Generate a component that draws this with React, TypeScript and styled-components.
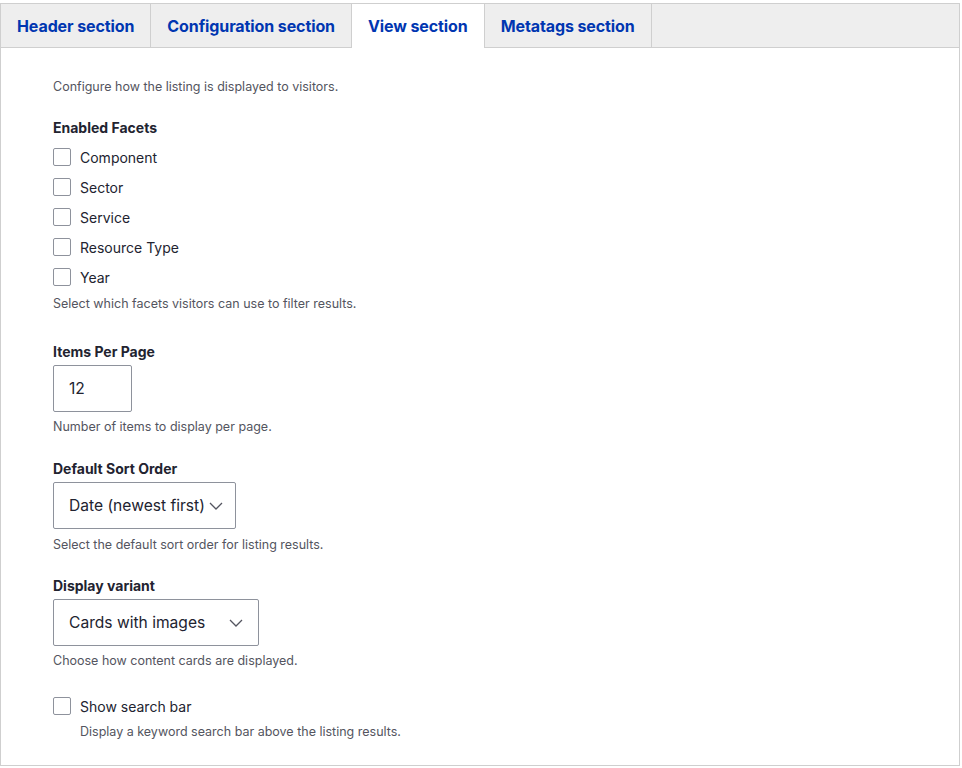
import React from "react";
import styled, { createGlobalStyle } from "styled-components";

const Global = createGlobalStyle`
  html, body { margin: 0; padding: 0; background: #ffffff; }
  body { font-family: Inter, "Noto Sans", "Liberation Sans", sans-serif; color: #222330; }
  * { box-sizing: border-box; }
`;

const Page = styled.div`
  padding-top: 3px;
  width: 960px;
`;

const Panel = styled.section`
  border: 1px solid #cfcfcf;
  background: #fff;
`;

const TabBar = styled.nav`
  display: flex;
  height: 44px;
  background: #eeeeee;
  border-bottom: 1px solid #cfcfcf;
`;

const Tab = styled.div<{ $active?: boolean }>`
  display: flex;
  align-items: center;
  padding: 0 16px;
  height: ${(p) => (p.$active ? "44px" : "43px")};
  background: ${(p) => (p.$active ? "#ffffff" : "transparent")};
  border-right: 1px solid #cfcfcf;
  color: #0036b1;
  font-weight: 700;
  font-size: 16px;
  letter-spacing: -0.1px;
  white-space: nowrap;
`;

const Body = styled.div`
  padding: 30px 52px 24px;
`;

const Intro = styled.p`
  margin: 0;
  font-size: 12.5px;
  line-height: 18px;
  color: #545560;
`;

const Label = styled.div<{ $gap: number }>`
  margin-top: ${(p) => p.$gap}px;
  font-size: 14px;
  line-height: 18px;
  font-weight: 700;
  color: #222330;
`;

const CheckRow = styled.label`
  display: flex;
  align-items: center;
  gap: 9px;
  height: 30px;
  font-size: 14px;
  color: #222330;
`;

const Box = styled.span`
  width: 18px;
  height: 18px;
  border: 1px solid #8e929c;
  border-radius: 2px;
  background: #fff;
  flex: none;
`;

const Desc = styled.div<{ $gap: number; $indent?: boolean }>`
  margin-top: ${(p) => p.$gap}px;
  padding-left: ${(p) => (p.$indent ? "27px" : "0")};
  font-size: 12.5px;
  line-height: 18px;
  color: #545560;
`;

const Field = styled.div<{ $w: number; $spread?: boolean }>`
  margin-top: 4px;
  width: ${(p) => p.$w}px;
  height: 47px;
  border: 1px solid #8e929c;
  border-radius: 2px;
  display: flex;
  align-items: center;
  justify-content: ${(p) => (p.$spread ? "space-between" : "flex-start")};
  gap: 4px;
  padding: 0 15px;
  font-size: 15.6px;
  color: #222330;
  white-space: nowrap;
`;

const Spacer = styled.div<{ $h: number }>`
  height: ${(p) => p.$h}px;
`;

const Chevron = () => (
  <svg width="14" height="8" viewBox="0 0 14 8" fill="none" style={{ flex: "none" }}>
    <path d="M1 1l6 6 6-6" stroke="#545560" strokeWidth="1.3" />
  </svg>
);

const facets = ["Component", "Sector", "Service", "Resource Type", "Year"];

export default function App() {
  return (
    <Page>
      <Global />
      <Panel>
        <TabBar>
          <Tab>Header section</Tab>
          <Tab>Configuration section</Tab>
          <Tab $active>View section</Tab>
          <Tab>Metatags section</Tab>
        </TabBar>
        <Body>
          <Intro>Configure how the listing is displayed to visitors.</Intro>
          <Label $gap={23}>Enabled Facets</Label>
          <Spacer $h={5} />
          {facets.map((f) => (
            <CheckRow key={f}>
              <Box />
              {f}
            </CheckRow>
          ))}
          <Desc $gap={3}>Select which facets visitors can use to filter results.</Desc>
          <Label $gap={30}>Items Per Page</Label>
          <Field $w={79}>12</Field>
          <Desc $gap={6}>Number of items to display per page.</Desc>
          <Label $gap={24}>Default Sort Order</Label>
          <Field $w={183}>
            Date (newest first)
            <Chevron />
          </Field>
          <Desc $gap={7}>Select the default sort order for listing results.</Desc>
          <Label $gap={23}>Display variant</Label>
          <Field $w={206} $spread>
            Cards with images
            <Chevron />
          </Field>
          <Desc $gap={6}>Choose how content cards are displayed.</Desc>
          <Spacer $h={21} />
          <CheckRow>
            <Box />
            Show search bar
          </CheckRow>
          <Desc $gap={2} $indent>
            Display a keyword search bar above the listing results.
          </Desc>
        </Body>
      </Panel>
    </Page>
  );
}
